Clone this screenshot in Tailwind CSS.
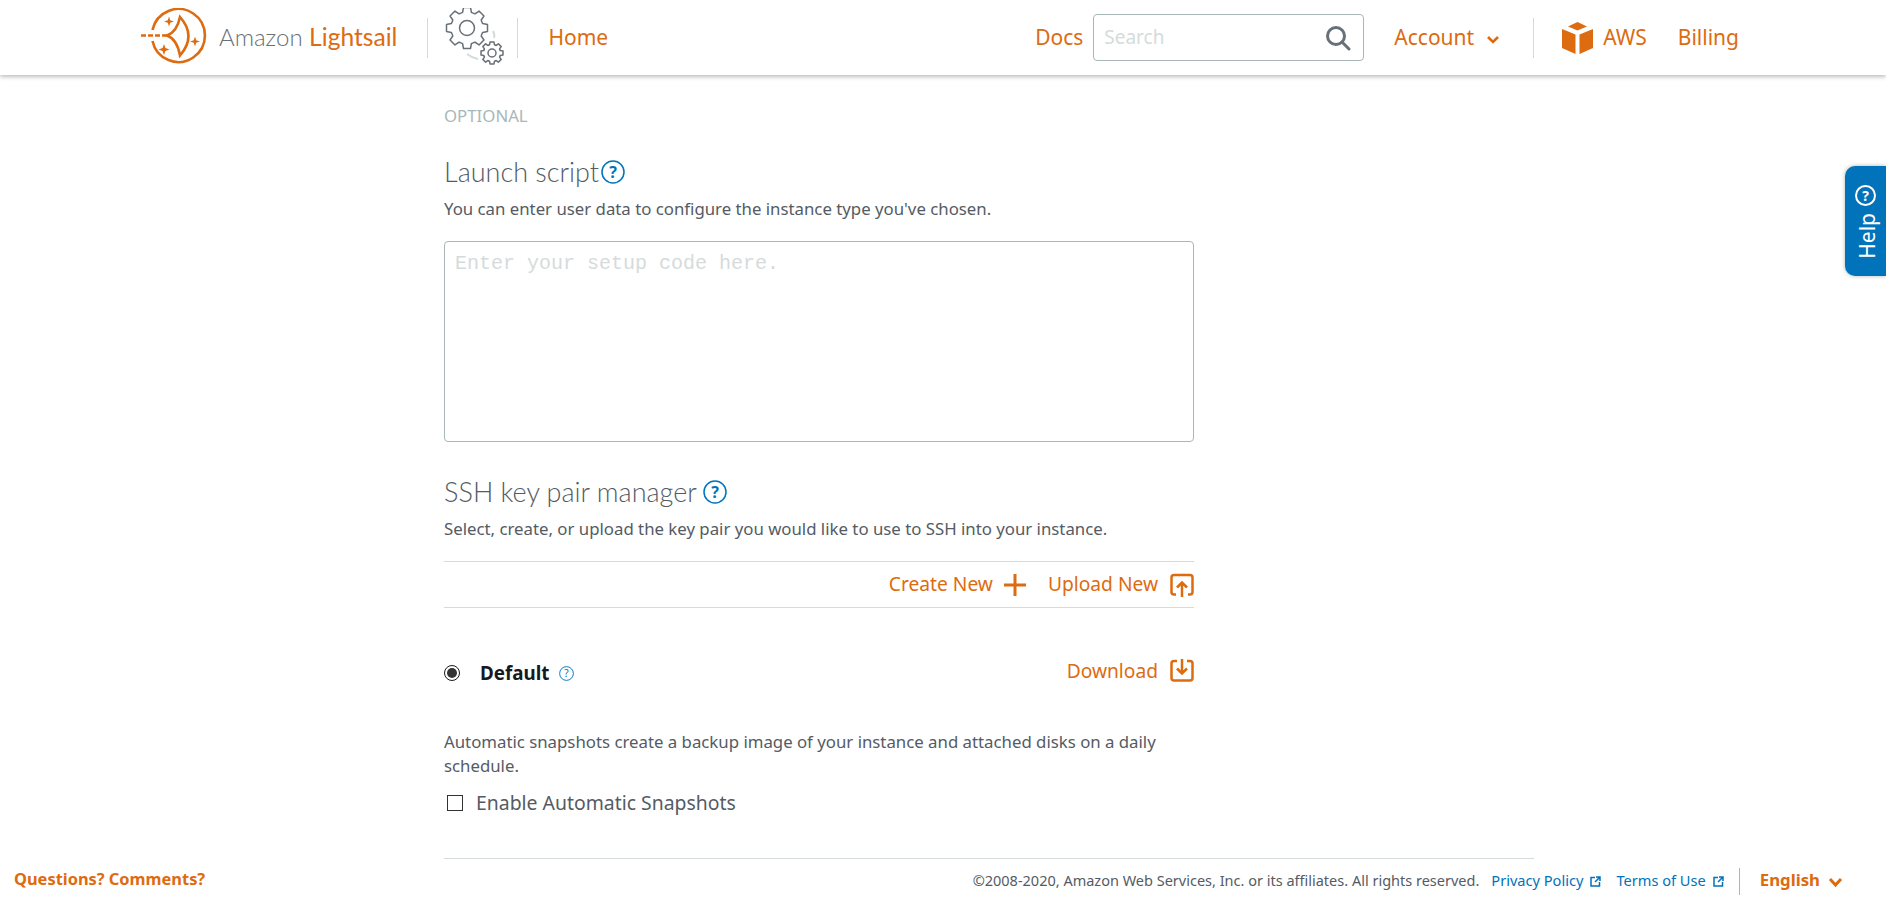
<!DOCTYPE html>
<html lang="en">
<head>
    <meta charset="UTF-8">
    <title>Amazon Lightsail - Create instance</title>
    <script src="https://cdn.jsdelivr.net/npm/@tailwindcss/browser@4"></script>
</head>
<body class="bg-white h-[900px] overflow-hidden font-['Noto_Sans',sans-serif] text-[#545b64]">

    <!-- top nav -->
    <header class="h-[75px] flex items-center bg-white shadow-[0_2px_4px_rgba(0,0,0,0.25)] text-[#dd6b10] text-[21px]">
        <svg class="ml-[141px] w-[66px] h-[60px] shrink-0" viewBox="0 0 66 60" fill="none" stroke="#dd6b10" stroke-width="2.600">
            <path d="M11.500 22 A26.500 26.500 0 1 1 11.500 33"/>
            <path d="M0 27.500 H26" stroke-dasharray="5 2"/>
            <path d="M39 9 Q36 24 26 27.500 Q36 31 39 47.500 Q56 28 39 9 Z"/>
            <g fill="#dd6b10" stroke="none">
                <path d="M28 8.500 L29.200 12.300 L33 13.500 L29.200 14.700 L28 18.500 L26.800 14.700 L23 13.500 L26.800 12.300 Z"/>
                <path d="M54 28.500 L55.200 32.300 L59 33.500 L55.200 34.700 L54 38.500 L52.800 34.700 L49 33.500 L52.800 32.300 Z"/>
                <path d="M23 36 L24.400 40.100 L28.500 41.500 L24.400 42.900 L23 47 L21.600 42.900 L17.500 41.500 L21.600 40.100 Z"/>
            </g>
        </svg>
        <span class="ml-[12px] text-[24px] text-[#687078] font-['Lato',sans-serif] font-light whitespace-nowrap">Amazon <span class="text-[24.600px] text-[#dd6b10] font-normal">Lightsail</span></span>
        <div class="ml-[30px] w-px h-10 bg-[#d5dbdb]"></div>
        <svg class="ml-[16px] w-[60px] h-[60px] shrink-0" viewBox="0 0 60 60" fill="none" stroke="#687078" stroke-width="1.500" stroke-linejoin="round">
            <defs>
                <path id="bigTooth" d="M-6.100-14.800 L-4.400-15.700 L-3.500-20.500 L3.500-20.500 L4.400-15.700 L6.100-14.800"/>
                <path id="smallTooth" d="M-3.500-7.700 L-2.400-8.300 L-2-11 L2-11 L2.400-8.300 L3.500-7.700"/>
            </defs>
            <g transform="translate(23 20)">
                <use href="#bigTooth"/><use href="#bigTooth" transform="rotate(45)"/><use href="#bigTooth" transform="rotate(90)"/><use href="#bigTooth" transform="rotate(135)"/>
                <use href="#bigTooth" transform="rotate(180)"/><use href="#bigTooth" transform="rotate(225)"/><use href="#bigTooth" transform="rotate(270)"/><use href="#bigTooth" transform="rotate(315)"/>
                <circle r="7.500"/>
            </g>
            <g transform="translate(48 45)">
                <use href="#smallTooth"/><use href="#smallTooth" transform="rotate(45)"/><use href="#smallTooth" transform="rotate(90)"/><use href="#smallTooth" transform="rotate(135)"/>
                <use href="#smallTooth" transform="rotate(180)"/><use href="#smallTooth" transform="rotate(225)"/><use href="#smallTooth" transform="rotate(270)"/><use href="#smallTooth" transform="rotate(315)"/>
                <circle r="4"/>
            </g>
            <path d="M23 46 Q28 50 34 51 M49 23 Q51 27 50 30" stroke="#d5dbdb" stroke-width="2"/>
        </svg>
        <div class="ml-[13px] w-px h-10 bg-[#d5dbdb]"></div>
        <a class="ml-[30px]">Home</a>

        <a class="ml-auto">Docs</a>
        <div class="ml-[10px] w-[271px] h-[47px] flex items-center border border-[#aab7b8] rounded-[4px] pl-[10px] pr-[12px]">
            <input type="text" placeholder="Search" class="flex-1 min-w-0 text-[19px] outline-none placeholder:text-[#d5dbdb]">
            <svg class="w-[26px] h-[26px]" viewBox="0 0 26 26" fill="none" stroke="#687078" stroke-width="3" stroke-linecap="round"><circle cx="11" cy="11" r="8.500"/><path d="M17 17 L24 24"/></svg>
        </div>
        <a class="ml-[30px]">Account</a>
        <svg class="ml-[12px] w-[14px] h-[10px] mt-1" viewBox="0 0 14 10" fill="none" stroke="#dd6b10" stroke-width="2.600"><path d="M2 2 L7 7 L12 2"/></svg>
        <div class="ml-[33px] w-px h-10 bg-[#d5dbdb]"></div>
        <svg class="ml-[28px] w-[31px] h-[32px]" viewBox="0 0 31 32" fill="#dd6b10"><path d="M15.500 0 L25 4.500 L15.500 8.500 L6 4.500 Z"/><path d="M0 7 L13.500 12.500 L13.500 32 L0 26 Z"/><path d="M31 7 L17.500 12.500 L17.500 32 L31 26 Z"/></svg>
        <a class="ml-[10px]">AWS</a>
        <a class="ml-[31px] mr-[147px]">Billing</a>
    </header>

    <!-- form column -->
    <main class="w-[750px] ml-[444px]">
        <p class="mt-[31px] h-5 leading-5 text-[16.800px] text-[#aab7b8]">OPTIONAL</p>
        <div class="mt-[26px] h-10 flex items-center gap-[2px]">
            <h2 class="text-[27px] font-light font-['Lato',sans-serif] leading-10">Launch script</h2>
            <svg class="w-6 h-6" viewBox="0 0 24 24" fill="none" stroke="#0073bb" stroke-width="1.500"><circle cx="12" cy="12" r="11"/><text x="12" y="18" text-anchor="middle" font-size="16" font-weight="700" fill="#0073bb" stroke="none">?</text></svg>
        </div>
        <p class="mt-[5px] text-[16.800px] leading-6">You can enter user data to configure the instance type you've chosen.</p>
        <textarea placeholder="Enter your setup code here." class="mt-[20px] block w-full h-[201px] border border-[#aab7b8] rounded-[4px] px-[10px] py-[10px] font-['Liberation_Mono',monospace] text-[20px] leading-6 outline-none resize-none placeholder:text-[#d5dbdb]"></textarea>

        <div class="mt-[30px] h-10 flex items-center gap-[6px]">
            <h2 class="text-[27px] font-light font-['Lato',sans-serif] leading-10">SSH key pair manager</h2>
            <svg class="w-6 h-6" viewBox="0 0 24 24" fill="none" stroke="#0073bb" stroke-width="1.500"><circle cx="12" cy="12" r="11"/><text x="12" y="18" text-anchor="middle" font-size="16" font-weight="700" fill="#0073bb" stroke="none">?</text></svg>
        </div>
        <p class="mt-[5px] text-[16.800px] leading-6">Select, create, or upload the key pair you would like to use to SSH into your instance.</p>

        <div class="mt-[20px] h-[47px] flex items-center justify-end border-y border-[#d5dbdb] text-[#dd6b10] text-[19.200px]">
            <span>Create New</span>
            <svg class="ml-[10px] w-6 h-6" viewBox="0 0 24 24" fill="none" stroke="#dd6b10" stroke-width="3"><path d="M12 1 V23 M1 12 H23"/></svg>
            <span class="ml-[21px]">Upload New</span>
            <svg class="ml-[12px] w-6 h-6" viewBox="0 0 24 24" fill="none" stroke="#dd6b10" stroke-width="2.500"><path d="M7 2 H20 Q22.500 2 22.500 4.500 V19 Q22.500 21.500 20 21.500 H18 M6 21.500 H4 Q1.500 21.500 1.500 19 V4.500 Q1.500 2 4 2 H7"/><path d="M12 24 V10 M7 14.500 L12 9.500 L17 14.500"/></svg>
        </div>

        <div class="mt-[45px] h-10 flex items-center">
            <span class="w-4 h-4 rounded-full border border-[#16191f] flex items-center justify-center"><span class="w-[10px] h-[10px] rounded-full bg-[#333]"></span></span>
            <span class="ml-[20px] font-bold text-[18.800px] text-[#16191f]">Default</span>
            <svg class="ml-[10px] w-[15px] h-[15px]" viewBox="0 0 24 24" fill="none" stroke="#0073bb" stroke-width="1.500"><circle cx="12" cy="12" r="11"/><text x="12" y="18" text-anchor="middle" font-size="16" fill="#0073bb" stroke="none">?</text></svg>
            <div class="ml-auto -mt-[4px] flex items-center text-[#dd6b10] text-[19.200px]">
                <span>Download</span>
                <svg class="ml-[12px] w-6 h-6" viewBox="0 0 24 24" fill="none" stroke="#dd6b10" stroke-width="2.500"><path d="M7 2 H4 Q1.500 2 1.500 4.500 V19 Q1.500 21.500 4 21.500 H20 Q22.500 21.500 22.500 19 V4.500 Q22.500 2 20 2 H17"/><path d="M12 0 V14 M7 9.500 L12 14.500 L17 9.500"/></svg>
            </div>
        </div>

        <p class="mt-[37px] text-[16.800px] leading-6">Automatic snapshots create a backup image of your instance and attached disks on a daily schedule.</p>
        <label class="mt-[13px] h-6 flex items-center">
            <span class="ml-[3px] w-4 h-4 border border-[#333]"></span>
            <span class="ml-[13px] text-[19.400px]">Enable Automatic Snapshots</span>
        </label>
    </main>

    <!-- footer -->
    <div class="mt-[43px] ml-[444px] w-[1090px] border-t border-[#d5dbdb]"></div>
    <footer class="h-[44px] flex items-center pl-[14px] pr-[43px]">
        <a class="-mt-[4px] font-bold text-[16.400px] text-[#dd6b10]">Questions? Comments?</a>
        <span class="ml-auto text-[14.500px]">©2008-2020, Amazon Web Services, Inc. or its affiliates. All rights reserved.</span>
        <a class="ml-[12px] text-[14.600px] text-[#0073bb]">Privacy Policy</a>
        <svg class="ml-[7px] w-[11px] h-[11px]" viewBox="0 0 11 11" fill="none" stroke="#0073bb" stroke-width="1.500"><path d="M5 1.500 H1 V10 H9.500 V6 M6 1 H10 V5 M10 1 L5 6"/></svg>
        <a class="ml-[15px] text-[14.600px] text-[#0073bb]">Terms of Use</a>
        <svg class="ml-[7px] w-[11px] h-[11px]" viewBox="0 0 11 11" fill="none" stroke="#0073bb" stroke-width="1.500"><path d="M5 1.500 H1 V10 H9.500 V6 M6 1 H10 V5 M10 1 L5 6"/></svg>
        <div class="ml-[15px] w-px h-[27px] bg-[#aab7b8]"></div>
        <a class="-mt-[2px] ml-[20px] font-bold text-[16.800px] text-[#dd6b10]">English</a>
        <svg class="ml-[8px] w-[15px] h-[11px] mt-[2px]" viewBox="0 0 15 11" fill="none" stroke="#dd6b10" stroke-width="3"><path d="M2 2 L7.500 8 L13 2"/></svg>
    </footer>

    <!-- help tab -->
    <div class="absolute right-0 top-[166px] w-[41px] h-[110px] bg-[#0073bb] rounded-l-[10px] shadow-[0_0_4px_rgba(0,0,0,0.3)] flex flex-col items-center pt-[19px] gap-[7px] text-white">
        <svg class="w-[21px] h-[21px] shrink-0" viewBox="0 0 21 21" fill="none" stroke="#fff" stroke-width="2"><circle cx="10.500" cy="10.500" r="9.500"/><text x="10.500" y="15.500" text-anchor="middle" font-size="14" font-weight="700" fill="#fff" stroke="none">?</text></svg>
        <span class="ml-[3px] [writing-mode:vertical-rl] rotate-180 text-[21px] leading-none">Help</span>
    </div>
</body>
</html>
